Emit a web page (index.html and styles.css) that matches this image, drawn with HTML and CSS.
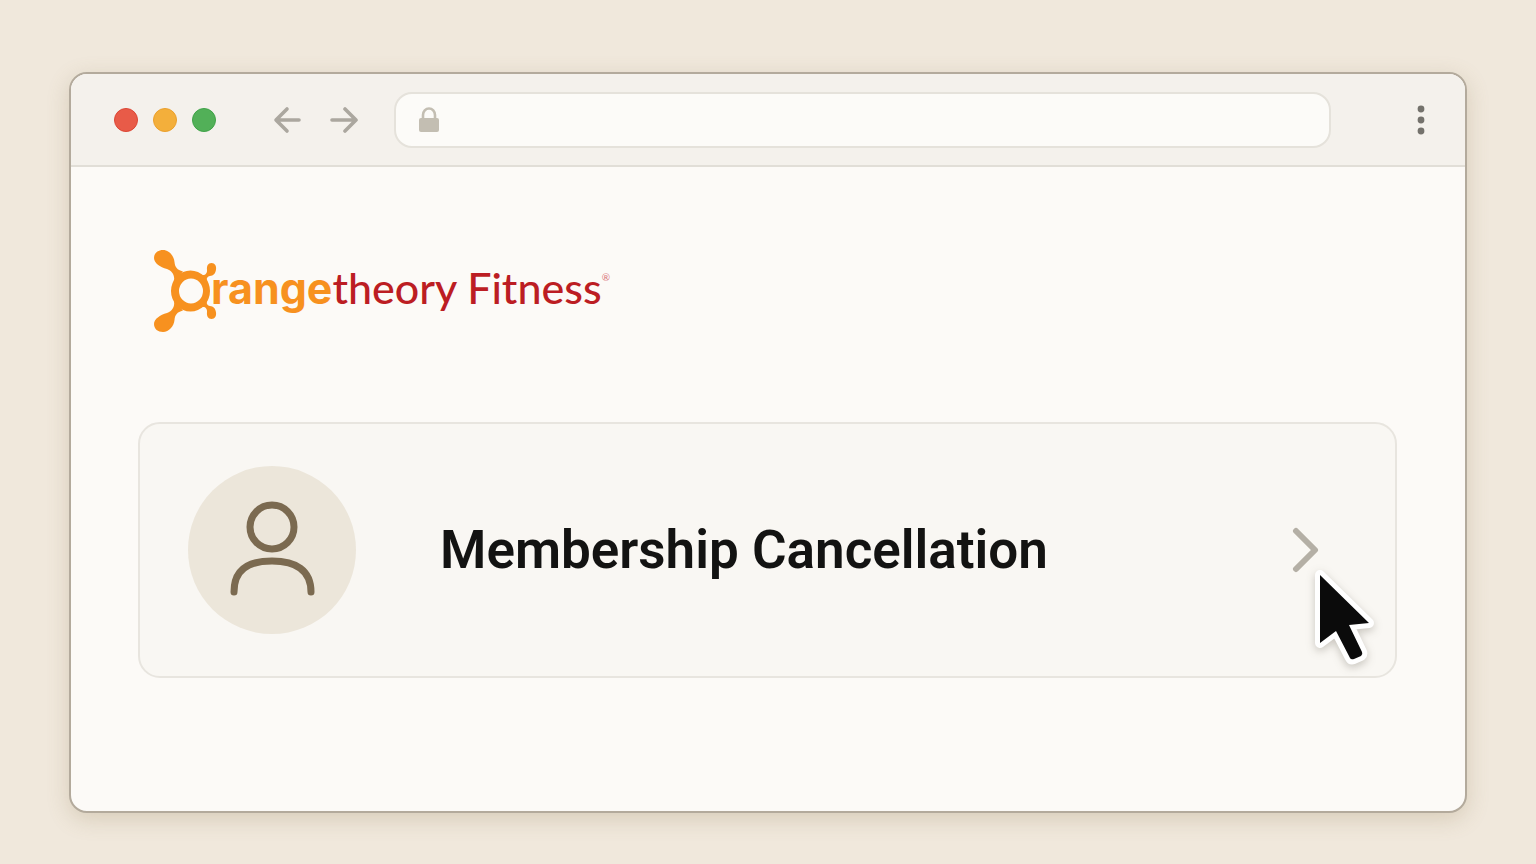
FILE: index.html
```html
<!DOCTYPE html>
<html lang="en">
<head>
    <meta charset="UTF-8">
    <meta name="viewport" content="width=device-width, initial-scale=1.0">
    <title>Orangetheory Fitness - Membership Cancellation</title>
    <link rel="stylesheet" href="styles.css">
</head>
<body>

    <div class="window">
        <header class="toolbar">
            <div class="lights">
                <span class="light red"></span>
                <span class="light yellow"></span>
                <span class="light green"></span>
            </div>

            <nav class="nav">
                <button class="icon-btn" type="button" aria-label="Back">
                    <svg width="28" height="28" viewBox="0 0 28 28"><path d="M14 3 L3 14 L14 25 M4 14 H26"/></svg>
                </button>
                <button class="icon-btn" type="button" aria-label="Forward">
                    <svg width="28" height="28" viewBox="0 0 28 28"><path d="M15 3 L26 14 L15 25 M25 14 H2"/></svg>
                </button>
            </nav>

            <label class="address">
                <svg class="lock" width="20" height="26" viewBox="0 0 20 26">
                    <path class="shackle" d="M4 12 V8 a6 6.5 0 0 1 12 0 V12"/>
                    <rect x="0" y="11" width="20" height="14" rx="2"/>
                </svg>
                <input type="text" aria-label="Address">
            </label>

            <button class="icon-btn menu-btn" type="button" aria-label="Menu">
                <svg width="8" height="30" viewBox="0 0 8 30">
                    <circle cx="4" cy="4" r="3.4"/>
                    <circle cx="4" cy="15" r="3.4"/>
                    <circle cx="4" cy="26" r="3.4"/>
                </svg>
            </button>
        </header>

        <main class="content">
            <div class="logo">
                <svg class="logo-mark" width="64" height="84" viewBox="0 0 64 84">
                    <defs>
                        <g id="arms">
                            <path d="M1 9 C1 4 5 1 10 1 C16 1 21 7 21.500 13 C22 18 24 21 30 22.500 L21 32 C22 26 19 22 14 20 C7 18 1 14 1 9 Z"/>
                            <path d="M47 25 C51 27.500 54.500 25 54 21 C53.500 17 55 14 58.500 14 C62 14 63.500 17 63 20.500 C62.500 25 60 26.500 57 27 C54 27.500 52.500 30 55 34 Z"/>
                        </g>
                    </defs>
                    <use href="#arms"/>
                    <use href="#arms" transform="matrix(1 0 0 -1 0 84)"/>
                    <path fill-rule="evenodd" d="M18 42 a19.500 20.500 0 1 0 39 0 a19.500 20.500 0 1 0 -39 0 Z M26 42 a12 12.500 0 1 1 24 0 a12 12.500 0 1 1 -24 0 Z"/>
                </svg>
                <span class="logo-text"><b>range</b>theory Fitness</span><sup class="reg">®</sup>
            </div>

            <button class="card" type="button">
                <span class="avatar">
                    <svg width="88" height="96" viewBox="0 0 88 96">
                        <circle cx="44" cy="25" r="22"/>
                        <path d="M6 90 C6 68 20 59 44 59 C68 59 83 68 83 90"/>
                    </svg>
                </span>
                <span class="card-title">Membership Cancellation</span>
                <svg class="chevron" width="28" height="46" viewBox="0 0 28 46"><path d="M4 4 L23 23 L4 42"/></svg>
                <svg class="cursor" width="62" height="98" viewBox="0 0 62 98">
                    <path d="M6 5 L55 53 L35 55 L48 82 Q49 84 47 86 L40 89 Q37 90 36 88 L22 61 L6 73 Z"/>
                </svg>
            </button>
        </main>
    </div>

</body>
</html>
```

FILE: styles.css
```css
* {
    box-sizing: border-box;
}

body {
    display: flex;
    min-height: 100vh;
    margin: 0;
    padding: 72px 69px 51px;
    font-family: Roboto, "Liberation Sans", sans-serif;
    background-color: #f0e8dc;
    color: #131312;
}

button {
    padding: 0;
    border: none;
    background: none;
    color: inherit;
    font: inherit;
    cursor: pointer;
}

svg {
    display: block;
    flex: none;
}

.window {
    display: flex;
    flex: 1;
    flex-direction: column;
    min-width: 0;
    border: 2px solid #b3aa9c;
    border-radius: 18px;
    background-color: #fcfaf7;
    box-shadow: 0 6px 22px rgba(140, 115, 75, 0.24);
    overflow: hidden;
}

.toolbar {
    display: flex;
    align-items: center;
    height: 93px;
    padding: 0 40px 0 43px;
    border-bottom: 2px solid #e1ded7;
    background-color: #f4f1ec;
}

.lights {
    display: flex;
    gap: 15px;
}

.light {
    width: 24px;
    height: 24px;
    border: 1px solid;
    border-radius: 50%;
}

.red {
    border-color: #dc4635;
    background-color: #e85b48;
}

.yellow {
    border-color: #eba02c;
    background-color: #f3af3b;
}

.green {
    border-color: #3fa348;
    background-color: #52b058;
}

.nav {
    display: flex;
    gap: 29px;
    margin: 0 36px 0 57px;
}

.icon-btn path {
    fill: none;
    stroke: #aba79f;
    stroke-width: 3.6;
    stroke-linecap: round;
    stroke-linejoin: round;
}

.address {
    display: flex;
    flex: 1;
    align-items: center;
    gap: 12px;
    height: 56px;
    padding: 0 20px 0 23px;
    border: 2px solid #e5e2db;
    border-radius: 18px;
    background-color: #fcfbf8;
}

.address input {
    flex: 1;
    min-width: 0;
    border: none;
    outline: none;
    background: none;
    font: 20px Roboto, "Liberation Sans", sans-serif;
}

.lock {
    fill: #c3beb2;
}

.shackle {
    fill: none;
    stroke: #c3beb2;
    stroke-width: 2.6;
}

.menu-btn {
    margin-left: 86px;
    fill: #74726c;
}

.content {
    flex: 1;
    padding: 82px 68px 60px 67px;
}

.logo {
    display: flex;
    align-items: flex-start;
    margin: 0 0 89px 15px;
    font-family: Lato, "Liberation Sans", sans-serif;
    color: #bc1d23;
}

.logo-mark {
    margin-right: -6px;
    fill: #f7911f;
}

.logo-text {
    margin-top: 11px;
    font-size: 43px;
    font-weight: 500;
    line-height: 56px;
    white-space: nowrap;
}

.logo-text b {
    font-family: Inter, "Liberation Sans", sans-serif;
    font-weight: 700;
    color: #f7911f;
}

.reg {
    margin-top: 20px;
    font-size: 10px;
    line-height: 16px;
    color: #d9747a;
}

.card {
    position: relative;
    display: flex;
    align-items: center;
    width: 100%;
    padding: 42px 75px 42px 48px;
    border: 2px solid #e8e5df;
    border-radius: 22px;
    background-color: #f9f7f3;
    text-align: left;
}

.avatar {
    display: grid;
    flex: none;
    place-items: center;
    width: 168px;
    height: 168px;
    border-radius: 50%;
    background-color: #ece6da;
}

.avatar svg {
    overflow: visible;
    fill: none;
    stroke: #7b6a50;
    stroke-width: 7;
    stroke-linecap: round;
}

.card-title {
    flex: 1;
    margin-left: 84px;
    font-size: 53px;
    font-weight: 600;
    line-height: 64px;
}

.chevron {
    fill: none;
    stroke: #b4afa5;
    stroke-width: 6;
    stroke-linecap: round;
    stroke-linejoin: round;
}

.cursor {
    position: absolute;
    right: 19px;
    bottom: 8px;
    overflow: visible;
    fill: #0b0b0b;
    stroke: #fff;
    stroke-width: 10;
    stroke-linejoin: round;
    paint-order: stroke;
    filter: drop-shadow(0 3px 4px rgba(60, 50, 35, 0.25));
}
```
